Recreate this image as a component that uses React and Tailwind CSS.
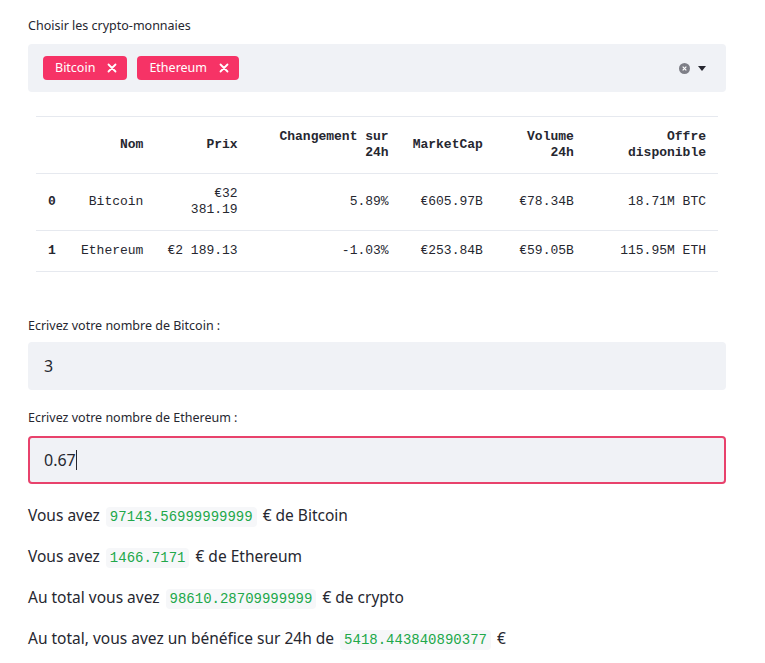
import React, { useState } from "react";

const sans = { fontFamily: '"Noto Sans", "Open Sans", sans-serif' };
const mono = { fontFamily: '"Liberation Mono", "DejaVu Sans Mono", monospace' };

const rows = [
    { idx: 0, nom: "Bitcoin", prix: ["€32", "381.19"], chg: "5.89%", mc: "€605.97B", vol: "€78.34B", offre: "18.71M BTC" },
    { idx: 1, nom: "Ethereum", prix: ["€2 189.13"], chg: "-1.03%", mc: "€253.84B", vol: "€59.05B", offre: "115.95M ETH" }
];

function Tag({ label }) {
    return (
        <span className="flex h-6 items-center gap-3 rounded bg-[#f63366] pl-3 pr-2.5 text-[12.5px] text-white">
            {label}
            <svg width="10" height="10" viewBox="0 0 10 10">
                <path d="M1.5 1.5 L8.5 8.5 M8.5 1.5 L1.5 8.5" stroke="white" strokeWidth="1.8" strokeLinecap="round" />
            </svg>
        </span>
    );
}

function Code({ children }) {
    return (
        <code className="mx-1.5 rounded bg-[#f6f7f9] px-1 py-0.5 text-[14px] leading-none text-[#21a84a]" style={mono}>
            {children}
        </code>
    );
}

export default function App() {
    const [btc, setBtc] = useState("3");
    const [eth, setEth] = useState("0.67");

    return (
        <div className="min-h-screen bg-white pl-7 pt-4 text-[#262730]" style={sans}>
            <div className="w-[698px]">
                <p className="text-[12.5px] leading-5">Choisir les crypto-monnaies</p>
                <div className="mt-2 flex h-12 items-center justify-between rounded bg-[#f0f2f6] pl-[15px] pr-5">
                    <div className="flex gap-2.5">
                        <Tag label="Bitcoin" />
                        <Tag label="Ethereum" />
                    </div>
                    <div className="flex items-center gap-2">
                        <svg width="11" height="11" viewBox="0 0 12 12">
                            <circle cx="6" cy="6" r="6" fill="#7e7f87" />
                            <path d="M4 4 L8 8 M8 4 L4 8" stroke="white" strokeWidth="1.3" />
                        </svg>
                        <svg width="8" height="5" viewBox="0 0 8 5">
                            <path d="M0 0 H8 L4 5 Z" fill="#262730" />
                        </svg>
                    </div>
                </div>

                <div className="mx-2 mt-6 text-[13px] leading-4" style={mono}>
                    <table className="w-full border-collapse">
                        <thead>
                            <tr className="border-y border-[#e6e9ef] font-bold">
                                <th className="w-[33px] py-3"></th>
                                <th className="w-[85px] px-3 py-3 text-right">Nom</th>
                                <th className="w-[94px] px-3 py-3 text-right">Prix</th>
                                <th className="w-[151px] px-3 py-3 text-right">Changement sur<br />24h</th>
                                <th className="w-[94px] px-3 py-3 text-right">MarketCap</th>
                                <th className="w-[91px] px-3 py-3 text-right">Volume<br />24h</th>
                                <th className="px-3 py-3 text-right">Offre<br />disponible</th>
                            </tr>
                        </thead>
                        <tbody>
                            {rows.map((r) => (
                                <tr key={r.idx} className="border-b border-[#e6e9ef]">
                                    <td className="py-3 pl-3 font-bold">{r.idx}</td>
                                    <td className="px-3 py-3 text-right">{r.nom}</td>
                                    <td className="whitespace-nowrap px-3 py-3 text-right">
                                        {r.prix.map((p, i) => (
                                            <div key={i}>{p}</div>
                                        ))}
                                    </td>
                                    <td className="px-3 py-3 text-right">{r.chg}</td>
                                    <td className="px-3 py-3 text-right">{r.mc}</td>
                                    <td className="px-3 py-3 text-right">{r.vol}</td>
                                    <td className="whitespace-nowrap px-3 py-3 text-right">{r.offre}</td>
                                </tr>
                            ))}
                        </tbody>
                    </table>
                </div>

                <p className="mt-[44px] text-[12.5px] leading-5">Ecrivez votre nombre de Bitcoin :</p>
                <input
                    className="mt-1.5 block h-12 w-full rounded border-2 border-[#f0f2f6] bg-[#f0f2f6] px-[14px] text-[16px] outline-none"
                    value={btc}
                    onChange={(e) => setBtc(e.target.value)}
                />

                <p className="mt-[18px] text-[12.5px] leading-5">Ecrivez votre nombre de Ethereum :</p>
                <div className="mt-2 flex h-12 w-full items-center rounded border-2 border-[#e8426c] bg-[#f0f2f6] px-[14px] text-[16px]">
                    <span>{eth}</span>
                    <span className="h-5 w-px bg-[#262730]"></span>
                </div>

                <div className="mt-[18px] flex flex-col gap-[15px] text-[15.5px] leading-[26px]">
                    <p>Vous avez<Code>97143.56999999999</Code>€ de Bitcoin</p>
                    <p>Vous avez<Code>1466.7171</Code>€ de Ethereum</p>
                    <p>Au total vous avez<Code>98610.28709999999</Code>€ de crypto</p>
                    <p>Au total, vous avez un bénéfice sur 24h de<Code>5418.443840890377</Code>€</p>
                </div>
            </div>
        </div>
    );
}
